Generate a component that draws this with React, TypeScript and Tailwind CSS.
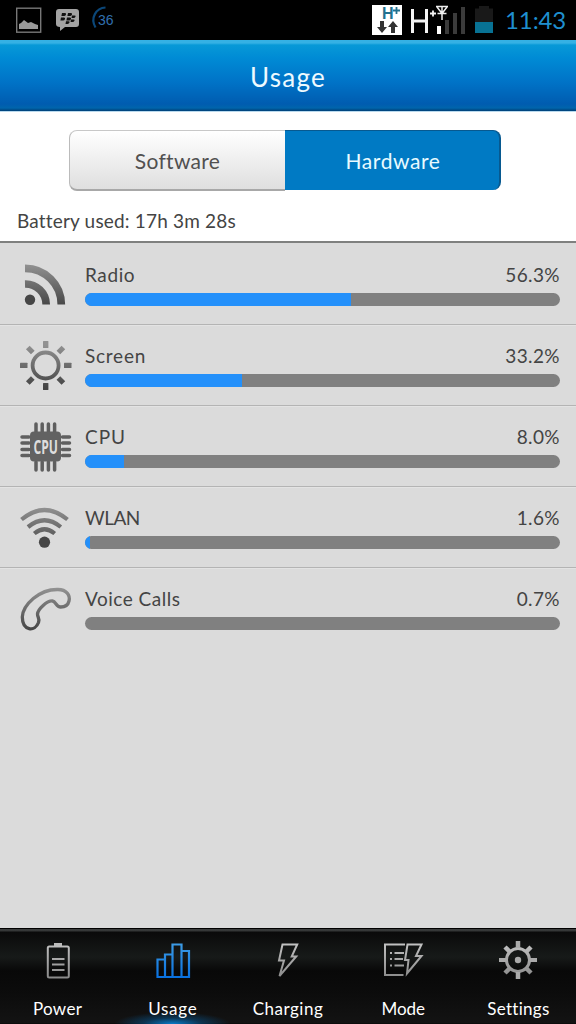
import type { ReactNode } from "react";

function StatusBar() {
  return (
    <header className="flex h-10 shrink-0 items-start bg-black">
      <svg width="120" height="40" viewBox="0 0 120 40" fill="none">
        <rect x="16.700" y="8.200" width="24" height="24" stroke="#777" strokeWidth="1.400" />
        <path d="M19 29v-5l2-1 3-3 4 3 3-1 2 1 2 1 3 1v4z" fill="#999" />
        <path d="M59 9h17q3 0 3 3v12q0 3-3 3H65l-5 4v-4q-4 0-4-3V12q0-3 3-3z" fill="#a3a3a3" />
        <g fill="#111">
          <path d="M62 13h3q1.500 0 1 1.500T64 16h-2.600zM68 13h3q1.500 0 1 1.500T70 16h-2.600zM61 17.500h3q1.500 0 1 1.500t-2 1.500h-2.600zM67 17.500h3q1.500 0 1 1.500t-2 1.500h-2.600zM72 15.500h2.500q1.500 0 1 1.300t-2 1.300h-2zM71 19.500h2.500q1.500 0 1 1.300t-2 1.300h-2zM66 21.300h2.500q1.500 0 1 1.300t-2 1.300h-2z" />
        </g>
        <path d="M105.500 7.500C96 8 90 18 95.500 27.500" stroke="#0b4779" strokeWidth="2.200" />
        <text x="98" y="25" fontFamily="Liberation Sans" fontSize="14" fill="#306fae" textLength="15.500">36</text>
      </svg>
      <svg className="ml-auto" width="136" height="40" viewBox="368 0 136 40" fill="none">
        <path d="M372 5h30v30h-30z" fill="#fff" />
        <text x="382" y="18.500" fontFamily="Liberation Sans" fontWeight="700" fontSize="16" fill="#23718f">H</text>
        <path d="M396.500 7v7M393 10.500h7" stroke="#23718f" strokeWidth="1.800" />
        <path d="M380 21h4v6h3l-5 6-5-6h3zM391 33h4v-6h3l-5-6-5 6h3z" fill="#333" />
        <path d="M412.500 9v24M426.500 9v24M412.500 21h14" stroke="#f4f4f4" strokeWidth="3" />
        <path d="M433 10.500v6M430 13.500h6" stroke="#f4f4f4" strokeWidth="1.800" />
        <path d="M436 6.500h12M437 7l5 6.500L447 7M442 6v14M437.500 13.500h9" stroke="#eee" strokeWidth="1.500" />
        <path d="M437 26h4v8h-4z" fill="#fff" />
        <path d="M445 20h4v14h-4zM453 13h4v21h-4zM461 7h4v27h-4z" fill="#3b3b3b" />
        <path d="M479 6h10v2.500h4V22h-18V8.500h4z" fill="#191919" />
        <path d="M475 22h18v11h-18z" fill="#087294" />
      </svg>
      <span className="mt-[4px] w-[72px] whitespace-nowrap pl-[1px] text-[24px] leading-[31px] tracking-[-0.1px] text-[#1f8fcf]">11:43</span>
    </header>
  );
}

function IconFrame({ children, id }: { children: ReactNode; id: string }) {
  return (
    <svg className="ml-[18px] mt-[15px] h-[54px] w-[56px] shrink-0" viewBox="18 259 56 54" fill="none">
      <defs>
        <linearGradient id={id} gradientUnits="userSpaceOnUse" x1="0" y1="264" x2="0" y2="307">
          <stop stopColor="#929292" />
          <stop offset="1" stopColor="#444" />
        </linearGradient>
      </defs>
      {children}
    </svg>
  );
}

const RadioIcon = () => (
  <IconFrame id="radio">
    <path d="M25 268.300A36.200 36.200 0 0 1 61.300 304.500M25 284A20.700 20.700 0 0 1 46.200 304.500" stroke="url(#radio)" strokeWidth="7.700" />
    <circle cx="30" cy="299.800" r="5.200" fill="#464646" />
  </IconFrame>
);

const ScreenIcon = () => (
  <IconFrame id="screen">
    <circle cx="45.600" cy="284.500" r="13" stroke="url(#screen)" strokeWidth="3.800" />
    <g fill="url(#screen)">
      <rect x="43" y="260" width="5.400" height="7" rx="0.500" />
      <rect x="43" y="302" width="5.400" height="7" rx="0.500" />
      <rect x="20" y="281.700" width="7.500" height="5.200" rx="0.500" />
      <rect x="64" y="281.700" width="7.500" height="5.200" rx="0.500" />
    </g>
    <path d="m27.800 266.500 5 5M63.400 266.500l-5 5M27.800 302l5-5M63.400 302l-5-5" stroke="url(#screen)" strokeWidth="5.200" />
  </IconFrame>
);

const CpuIcon = () => (
  <IconFrame id="cpu">
    <path d="M36 262v8M42.200 262v8M48.400 262v8M54.600 262v8M36 300v8M42.200 300v8M48.400 300v8M54.600 300v8M22 275h7M22 281h7M22 287.500h7M22 293.500h7M62.500 275h7M62.500 281h7M62.500 287.500h7M62.500 293.500h7" stroke="#5f5f5f" strokeWidth="3.500" strokeLinecap="round" />
    <rect x="30" y="269.500" width="31" height="30" rx="4" fill="#626262" />
    <text x="33.500" y="292" fontFamily="Open Sans" fontSize="19" fontWeight="700" fill="#dedede" textLength="24.500" lengthAdjust="spacingAndGlyphs">CPU</text>
  </IconFrame>
);

const WlanIcon = () => (
  <IconFrame id="wlan">
    <path d="M21.500 276.500Q44.500 257.500 67.500 276.500M28 284Q44.500 270.500 60.800 284M34.300 290.500Q44.500 282 54.700 290.500" stroke="url(#wlan)" strokeWidth="4.200" />
    <circle cx="44.500" cy="299.200" r="5.600" fill="#464646" />
  </IconFrame>
);

const PhoneIcon = () => (
  <IconFrame id="phone">
    <path d="M22.300 293C23 281 39 265 58 265.500C66.500 265.700 70.500 271 69 277C68 281.300 64.500 283 60.700 283C56 283 56 277.500 52.500 277C47 276.500 38 285 37.500 290C37.300 293 40 294 38.500 298.500C35 308 22.500 307 22.300 293Z" stroke="url(#phone)" strokeWidth="3.300" />
  </IconFrame>
);

const usage = [
  { name: "Radio", spacing: "tracking-[0.6px]", percent: "56.3%", width: 266, icon: <RadioIcon /> },
  { name: "Screen", spacing: "tracking-[0.75px]", percent: "33.2%", width: 157, icon: <ScreenIcon /> },
  { name: "CPU", spacing: "tracking-[1px]", percent: "8.0%", width: 39, icon: <CpuIcon /> },
  { name: "WLAN", spacing: "tracking-[-0.5px]", percent: "1.6%", width: 5, icon: <WlanIcon /> },
  { name: "Voice Calls", spacing: "tracking-[0.5px]", percent: "0.7%", width: 0, icon: <PhoneIcon /> },
];

function TabIcon({ name }: { name: string }) {
  return (
    <svg className="h-[52px] w-[60px]" viewBox="0 0 60 52" fill="none" stroke="url(#silver)" strokeWidth="2">
      <defs>
        <linearGradient id="silver" gradientUnits="userSpaceOnUse" x1="0" y1="11" x2="0" y2="50">
          <stop stopColor="#c8c8c8" /><stop offset="1" stopColor="#888" />
        </linearGradient>
        <linearGradient id="blue" gradientUnits="userSpaceOnUse" x1="0" y1="14" x2="0" y2="49">
          <stop stopColor="#3e9de6" /><stop offset="1" stopColor="#0870df" />
        </linearGradient>
      </defs>
      {name === "Power" && <>
        <rect x="19.800" y="17.500" width="21" height="31" rx="1.500" />
        <path d="M26 14h8v3h-8z" fill="#bbb" stroke="none" />
        <path d="M24 30h12.500M24 35.500h12.500M24 41h12.500" />
      </>}
      {name === "Usage" && <path d="M14.500 30.500h7.500V48h-7.500zM22 25.500h7.500V48H22zM29.500 15.500h9V48h-9zM38.500 22h7.500v26h-7.500z" stroke="url(#blue)" strokeWidth="2.200" />}
      {name === "Charging" && <path d="M24.500 15.500h14.700l-5.500 12h4.500L21.500 47l4.500-15.500h-5z" />}
      {name === "Mode" && <>
        <path d="M32 15.500H12V46h18.500M17 24h2M17 30h2M17 36.500h2M21.500 24H31M21.500 30H30M21.500 36.500H31" />
        <path d="M34.500 15.500h14L43 27h5.500L34 44.500l1.500-13.500h-3.500z" />
      </>}
      {name === "Settings" && <>
        <circle cx="30" cy="31" r="11.500" strokeWidth="3" />
        <circle cx="30" cy="31" r="3.200" fill="#aaa" stroke="none" />
        <path d="M30 12v7M30 43v7" stroke="#aaa" strokeWidth="4.500" />
        <path d="M11 31h7M42 31h7" stroke="#aaa" strokeWidth="4" />
        <path d="M17 18l5 5M43 18l-5 5M17 44l5-5M43 44l-5-5" strokeWidth="4.500" />
      </>}
    </svg>
  );
}

const tabs = [
  { name: "Power", spacing: "tracking-[0.35px]" },
  { name: "Usage", spacing: "tracking-[0.7px]" },
  { name: "Charging", spacing: "tracking-[0.5px]" },
  { name: "Mode", spacing: "tracking-[0px]" },
  { name: "Settings", spacing: "tracking-[0.3px]" },
];

export default function App() {
  return (
    <div className="flex h-[1024px] w-[576px] flex-col overflow-hidden bg-[#dbdbdb] font-[Lato,sans-serif] text-[#444]">
      <StatusBar />
      <div className="flex h-[72px] shrink-0 items-center justify-center border-b border-[#b9d9ed] bg-[linear-gradient(180deg,#35b1e4_0px,#35b1e4_3px,#0799d7_5px,#008bd5_18px,#0073c7_42px,#005cb0_64px,#0065ac_68px,#003f75_71px)]">
        <h1 className="pt-[2px] text-[26px] leading-8 tracking-[1.3px] text-[#eefaff]">Usage</h1>
      </div>
      <div className="h-[131px] shrink-0 border-b-2 border-[#7f807f] bg-white pt-[18px]">
        <div className="ml-[69px] flex h-[61px] w-[432px] text-[21px]">
          <button className="flex h-[61px] w-[216px] items-center justify-center rounded-l-lg border-b-2 border-l border-t border-b-[#a8a8a8] border-l-[#bbb] border-t-[#c8c8c8] bg-linear-to-b from-white to-[#dfdfdf] pt-[2px] tracking-[0.3px] text-[#505050]">Software</button>
          <button className="flex h-[60px] w-[216px] items-center justify-center rounded-r-lg border-r-2 border-t border-r-[#075990] border-t-[#075990] bg-[#007ac4] pl-[2px] tracking-[0.6px] text-[#e8faff]">Hardware</button>
        </div>
        <p className="mt-[18px] pl-[17px] text-[19px] leading-6 tracking-[0.18px]">Battery used: 17h 3m 28s</p>
      </div>
      <main className="flex-1 pt-px">
        {usage.map((item) => (
          <section key={item.name} className="flex h-[81px] border-b border-[#b4b4b4] shadow-[0_1px_0_#e3e3e3] last:border-transparent last:shadow-none">
            {item.icon}
            <div className="ml-[11px] w-[475px] pt-[19px]">
              <div className="flex h-[30px] items-start justify-between text-[19px] leading-6">
                <span className={item.spacing}>{item.name}</span>
                <span className="tracking-[0.4px]">{item.percent}</span>
              </div>
              <div className="h-[13px] overflow-hidden rounded-full bg-[#808080]">
                <div className="h-full bg-[#2490fa]" style={{ width: item.width }} />
              </div>
            </div>
          </section>
        ))}
      </main>
      <nav className="flex h-24 shrink-0 border-t border-black bg-[linear-gradient(180deg,#3b3d3d_0px,#343636_2px,#0a0a0a_3px,#171a19_28px,#080808_42px,#0b0b0b_60px,#131313_94px,#050505_95px)] text-[17px] text-white">
        {tabs.map((tab) => (
          <button key={tab.name} className={tab.name === "Usage" ? "flex flex-1 flex-col items-center bg-[radial-gradient(ellipse_58px_12px_at_50%_100%,#087bc8_0%,#06569180_50%,transparent_100%)]" : "flex flex-1 flex-col items-center"}>
            <TabIcon name={tab.name} />
            <span className={`mt-[16px] leading-6 ${tab.spacing}`}>{tab.name}</span>
          </button>
        ))}
      </nav>
    </div>
  );
}
